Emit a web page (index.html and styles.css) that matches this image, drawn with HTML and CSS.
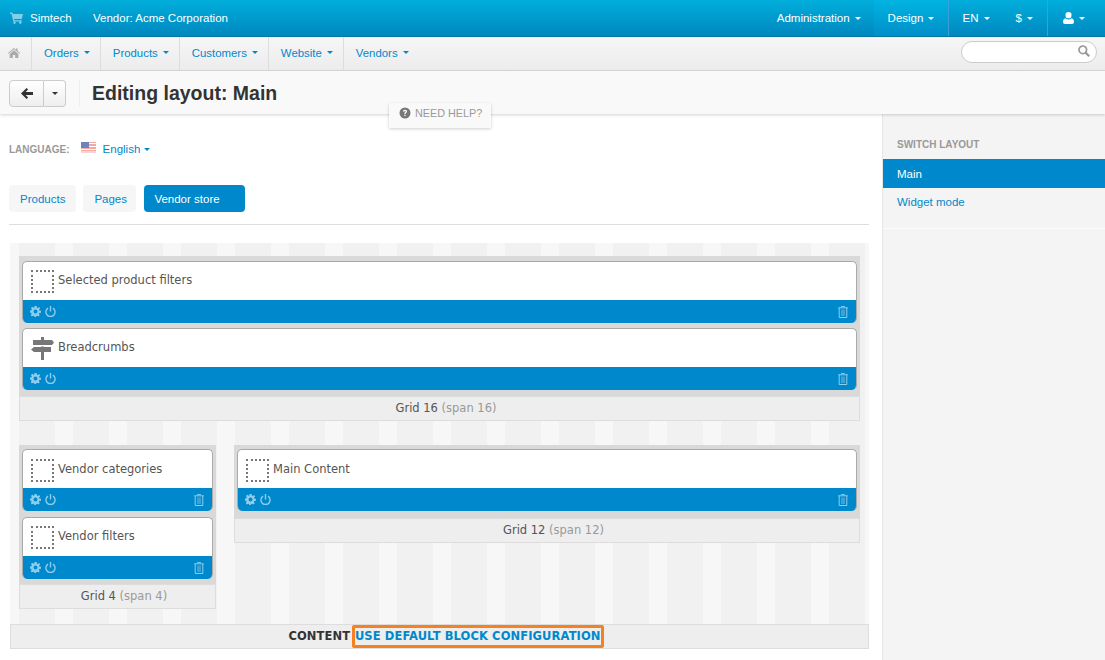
FILE: index.html
```html
<!DOCTYPE html>
<html>

<head>
    <title>Editing layout: Main</title>
    <link rel="stylesheet" href="styles.css">
</head>

<body>
    <!-- top bar -->
    <div class="topbar">
        <svg class="cart-icon" viewBox="0 0 13 12"><path d="M0 .5h2.4l.4 1.5H13l-1.2 5H4l.3 1.2h7.6v1.2H3.300L1.500 1.700H0zM4.500 9.500a1.200 1.200 0 1 0 .01 0zM10.300 9.500a1.200 1.200 0 1 0 .01 0z" /></svg>
        <a class="top-link brand">Simtech</a>
        <a class="top-link vendor">Vendor: Acme Corporation</a>
        <div class="top-right">
            <a class="top-item admin">Administration<span class="caret"></span></a>
            <a class="top-item active">Design<span class="caret"></span></a>
            <a class="top-item lang">EN<span class="caret"></span></a>
            <a class="top-item money">$<span class="caret"></span></a>
            <a class="top-item user">
                <svg class="user-icon" viewBox="0 0 11 12"><path d="M5.500 0a3 3 0 0 1 3 3.200 3 3 0 0 1-3 3.100 3 3 0 0 1-3-3.100 3 3 0 0 1 3-3.200zM2.400 6.200a4.200 4.200 0 0 0 6.200 0C10.200 6.600 11 8 11 10c0 1.200-.8 2-2 2H2c-1.200 0-2-.8-2-2 0-2 .8-3.400 2.400-3.800z" /></svg>
                <span class="caret"></span>
            </a>
        </div>
    </div>

    <!-- second nav -->
    <div class="subnav">
        <a class="home">
            <svg class="home-icon" viewBox="0 0 12 10"><path d="M6 0l2 1.700V.6h1.500v2.400L12 5.100l-.6.700L6 1.300.6 5.800 0 5.100zM6 2.300l4.300 3.600V10H7.200V7H4.800v3H1.700V5.900z" /></svg>
        </a>
        <a class="sub-item">Orders<span class="caret blue"></span></a>
        <a class="sub-item">Products<span class="caret blue"></span></a>
        <a class="sub-item">Customers<span class="caret blue"></span></a>
        <a class="sub-item">Website<span class="caret blue"></span></a>
        <a class="sub-item">Vendors<span class="caret blue"></span></a>
        <div class="search">
            <svg class="search-icon" viewBox="0 0 12 12"><circle cx="4.800" cy="4.800" r="3.800" fill="none" stroke="#999" stroke-width="1.700" /><path d="M7.600 7.600l3.600 3.600" stroke="#999" stroke-width="2.200" /></svg>
        </div>
    </div>

    <!-- toolbar -->
    <div class="toolbar">
        <div class="btn-group">
            <a class="btn back">
                <svg class="back-icon" viewBox="0 0 12 11"><path d="M5.600 0l1.500 1.500-2.500 2.600H12v2.800H4.600l2.500 2.600L5.600 11 0 5.500z" /></svg>
            </a>
            <a class="btn more"><span class="caret dark"></span></a>
        </div>
        <h1>Editing layout: Main</h1>
    </div>

    <div class="help-tab">
        <svg class="help-icon" viewBox="0 0 12 12"><circle cx="6" cy="6" r="5.500" fill="#777" /><path d="M4 4.700C4.100 3.400 5 2.800 6.100 2.800c1.200 0 2 .7 2 1.700 0 1.500-1.500 1.300-1.500 2.500H5.300c0-1.700 1.400-1.600 1.400-2.400 0-.4-.3-.6-.7-.6-.5 0-.7.300-.8.700zM5.300 7.700h1.400v1.400H5.300z" fill="#f9f9f9" /></svg>
        NEED HELP?
    </div>

    <div class="page">
        <div class="content">
            <div class="language">
                <span class="language-label">LANGUAGE:</span>
                <svg class="flag" viewBox="0 0 15 11"><rect width="15" height="11" fill="#f4a9a4" /><path d="M0 1.500h15M0 4.500h15M0 7.500h15M0 10h15" stroke="#fff" stroke-width="1.200" /><rect width="8" height="6" fill="#6f82bd" /></svg>
                <a class="language-link">English<span class="caret blue"></span></a>
            </div>

            <div class="tabs">
                <a class="tab">Products</a>
                <a class="tab">Pages</a>
                <a class="tab active">Vendor store</a>
            </div>

            <div class="container">
                <div class="grid">
                    <div class="block">
                        <div class="block-head"><span class="no-icon"></span>Selected product filters</div>
                        <div class="block-foot">
                            <svg class="gear"><use href="#gear" /></svg>
                            <svg class="power"><use href="#power" /></svg>
                            <svg class="trash"><use href="#trash" /></svg>
                        </div>
                    </div>
                    <div class="block">
                        <div class="block-head">
                            <svg class="sign-icon" viewBox="0 0 23 23"><path d="M10 0h3v3h8l2 2.500L21 8h-8v2h7v5h-7v8h-3v-8H3l-3-2.500L3 10h7V8H2V3h8z" fill="#777" /><path d="M0 8.800h23" stroke="#fff" stroke-width="1.400" /></svg>
                            Breadcrumbs
                        </div>
                        <div class="block-foot">
                            <svg class="gear"><use href="#gear" /></svg>
                            <svg class="power"><use href="#power" /></svg>
                            <svg class="trash"><use href="#trash" /></svg>
                        </div>
                    </div>
                    <div class="grid-caption">Grid 16 <span>(span 16)</span></div>
                </div>

                <div class="grid-row">
                    <div class="grid grid-4">
                        <div class="block">
                            <div class="block-head"><span class="no-icon"></span>Vendor categories</div>
                            <div class="block-foot">
                                <svg class="gear"><use href="#gear" /></svg>
                                <svg class="power"><use href="#power" /></svg>
                                <svg class="trash"><use href="#trash" /></svg>
                            </div>
                        </div>
                        <div class="block">
                            <div class="block-head"><span class="no-icon"></span>Vendor filters</div>
                            <div class="block-foot">
                                <svg class="gear"><use href="#gear" /></svg>
                                <svg class="power"><use href="#power" /></svg>
                                <svg class="trash"><use href="#trash" /></svg>
                            </div>
                        </div>
                        <div class="grid-caption">Grid 4 <span>(span 4)</span></div>
                    </div>
                    <div class="grid grid-12">
                        <div class="block">
                            <div class="block-head"><span class="no-icon"></span>Main Content</div>
                            <div class="block-foot">
                                <svg class="gear"><use href="#gear" /></svg>
                                <svg class="power"><use href="#power" /></svg>
                                <svg class="trash"><use href="#trash" /></svg>
                            </div>
                        </div>
                        <div class="grid-caption">Grid 12 <span>(span 12)</span></div>
                    </div>
                </div>
            </div>

            <div class="container-foot">
                <b>CONTENT</b>
                <a class="default-link">USE DEFAULT BLOCK CONFIGURATION</a>
            </div>
        </div>

        <div class="sidebar">
            <div class="sidebar-box">
                <h4>SWITCH LAYOUT</h4>
                <a class="side-link active">Main</a>
                <a class="side-link">Widget mode</a>
            </div>
        </div>
    </div>

    <!-- icons used by the blocks -->
    <svg class="icon-defs">
        <symbol id="gear" viewBox="0 0 12 12">
            <path fill-rule="evenodd" d="M4.800 0h2.400l.3 1.700 1 .4L10 1.200 11 2.800 9.800 4l.2.900 2 .3v2.200l-2 .3-.3 1 1 1.400-1.600 1.400-1.400-1-.9.400-.3 1.700H4.800l-.3-1.700-1-.4-1.400 1L.8 9.900l1-1.400-.4-1L0 7.200V4.900l1.600-.3.400-1L1 2.300 2.500.9l1.400 1 .9-.4zM6 3.900a2.100 2.100 0 1 0 .01 0z" />
        </symbol>
        <symbol id="power" viewBox="0 0 12 12">
            <path d="M3.300 2.300a5 5 0 1 0 5.400 0M6 0v6" fill="none" stroke="currentColor" stroke-width="1.500" />
        </symbol>
        <symbol id="trash" viewBox="0 0 10 12">
            <path d="M3.500 1V.4h3V1M.2 1.800h9.600M1.200 2v9.500h7.600V2" fill="none" stroke="currentColor" stroke-width="1" />
            <path d="M3 3.500h4v6.500H3z" fill="currentColor" opacity=".4" />
        </symbol>
    </svg>
</body>

</html>
```

FILE: styles.css
```css
html,
body {
    height: 660px;
    overflow: hidden;
}

body {
    margin: 0;
    font-family: "Liberation Sans", Arial, sans-serif;
    font-size: 12px;
    color: #333333;
    background-color: #ffffff;
    position: relative;
}

a {
    color: #0088cc;
    text-decoration: none;
}

.caret {
    display: inline-block;
    width: 0;
    height: 0;
    margin-left: 5px;
    vertical-align: 2px;
    border-top: 3px solid #ffffff;
    border-left: 3px solid transparent;
    border-right: 3px solid transparent;
}

.caret.blue {
    border-top-color: #0088cc;
}

.caret.dark {
    margin-left: 0;
    border-top-color: #333333;
}

/* top bar */
.topbar {
    display: flex;
    align-items: center;
    height: 36px;
    background: linear-gradient(to bottom, #00aedb, #0088c0);
    border-bottom: 1px solid #00769f;
}

.cart-icon {
    width: 13px;
    height: 12px;
    margin-left: 10px;
    fill: #7fd0ea;
}

.top-link {
    color: #ffffff;
    font-size: 11.5px;
}

.brand {
    margin-left: 7px;
}

.vendor {
    margin-left: 21.5px;
}

.top-right {
    display: flex;
    align-items: stretch;
    height: 36px;
    margin-left: auto;
}

.top-item {
    display: flex;
    align-items: center;
    padding: 0 14px;
    color: #ffffff;
    font-size: 11.5px;
}

.top-item.admin {
    padding-right: 13px;
}

.top-item.active {
    width: 75px;
    box-sizing: border-box;
    background: linear-gradient(to bottom, #00b4e2, #008fc8);
    border-right: 1px solid #3a9fdc;
}

.top-item.money {
    padding-left: 12px;
    padding-right: 14px;
    border-right: 1px solid #3a9fdc;
}

.top-item.user {
    width: 57px;
    box-sizing: border-box;
    padding: 0 0 0 15px;
}

.user-icon {
    width: 11px;
    height: 12px;
    fill: #ffffff;
}

/* second nav */
.subnav {
    display: flex;
    align-items: stretch;
    height: 33px;
    background: linear-gradient(to bottom, #f6f6f6, #ececec);
    border-bottom: 1px solid #d9d9d9;
    position: relative;
}

.home {
    display: flex;
    align-items: center;
    box-sizing: border-box;
    width: 31px;
    padding-left: 8px;
}

.home-icon {
    width: 12px;
    height: 10px;
    margin-bottom: 2px;
    fill: #aaaaaa;
}

.sub-item {
    display: flex;
    align-items: center;
    padding: 0 10px 2px 12px;
    border-left: 1px solid #dddddd;
    font-size: 11.4px;
}

.search {
    width: 134px;
    height: 20px;
    margin: 4px 8px 0 auto;
    background-color: #ffffff;
    border: 1px solid #cccccc;
    border-radius: 11px;
    display: flex;
    justify-content: flex-end;
}

.search-icon {
    width: 12px;
    height: 12px;
    margin: 3px 6px 0 0;
}

/* toolbar */
.toolbar {
    display: flex;
    align-items: center;
    height: 43px;
    padding-left: 9px;
    background-color: #f9f9f9;
    box-shadow: 0 1px 3px rgba(0, 0, 0, 0.18);
    position: relative;
}

.btn-group {
    display: flex;
    height: 27px;
    padding-right: 13px;
    margin-top: 1px;
    border-right: 1px solid #eeeeee;
}

.btn {
    display: flex;
    align-items: center;
    justify-content: center;
    box-sizing: border-box;
    height: 27px;
    background: linear-gradient(to bottom, #ffffff, #eeeeee);
    border: 1px solid #cccccc;
}

.back {
    width: 35px;
    border-radius: 4px 0 0 4px;
}

.more {
    width: 22px;
    border-left: none;
    border-radius: 0 4px 4px 0;
}

.back-icon {
    width: 12px;
    height: 11px;
    fill: #333333;
}

h1 {
    margin: 2px 0 0 12px;
    font-size: 19.5px;
    line-height: 27px;
    color: #333333;
}

.help-tab {
    position: absolute;
    left: 389px;
    top: 103px;
    width: 102px;
    height: 25px;
    box-sizing: border-box;
    padding: 4px 0 0 26px;
    background-color: #f9f9f9;
    box-shadow: 0 1px 3px rgba(0, 0, 0, 0.2);
    font-size: 10.8px;
    line-height: 13px;
    color: #999999;
}

.help-icon {
    position: absolute;
    left: 10px;
    top: 4px;
    width: 12px;
    height: 12px;
}

/* page */
.page {
    display: flex;
    height: 546px;
}

.content {
    box-sizing: border-box;
    width: 882px;
    padding: 0 13px 0 10px;
}

.language {
    display: flex;
    align-items: center;
    height: 16px;
    margin: 27px 0 0 -1px;
}

.language-label {
    font-size: 10px;
    font-weight: bold;
    color: #999999;
}

.flag {
    width: 15px;
    height: 11px;
    margin: -3px 0 0 11px;
}

.language-link {
    margin-left: 7px;
    font-size: 11.5px;
}

.language-link .caret {
    margin-left: 4px;
}

.tabs {
    display: flex;
    gap: 7px;
    margin: 28px 0 0 -1px;
    padding-bottom: 12px;
    border-bottom: 1px solid #dddddd;
}

.tab {
    height: 27px;
    padding: 0 11px;
    line-height: 28px;
    font-size: 11.5px;
    background-color: #f6f6f6;
    border-radius: 4px;
}

.tab:nth-child(2) {
    box-sizing: border-box;
    width: 53px;
    margin-right: 1px;
}

.tab.active {
    box-sizing: border-box;
    width: 101px;
    padding-left: 10px;
    color: #ffffff;
    background-color: #0088cc;
}

/* layout grid */
.container {
    margin-top: 18px;
    padding: 13px 9px 15px;
    background: repeating-linear-gradient(to right, #f7f7f7 0, #f7f7f7 9px, #f1f1f1 9px, #f1f1f1 45px, #f7f7f7 45px, #f7f7f7 54px);
}

.grid {
    padding-top: 5px;
    background-color: #d9d9d9;
}

.block {
    margin: 0 3px 5px;
    height: 62px;
    box-sizing: border-box;
    border: 1px solid #aaaaaa;
    border-bottom: none;
    border-radius: 5px;
    background-color: #ffffff;
    display: flex;
    flex-direction: column;
    overflow: hidden;
    font-family: "DejaVu Sans", sans-serif;
}

.block-head {
    display: flex;
    align-items: center;
    height: 38px;
    padding: 0 0 2px 8px;
    box-sizing: border-box;
    font-size: 11.5px;
    color: #555555;
}

.grid-row .block:first-child .block-head {
    padding-bottom: 0;
}

.no-icon {
    box-sizing: border-box;
    width: 23px;
    height: 23px;
    margin: 2px 4px 0 0;
    border: 2px dotted #777777;
}

.sign-icon {
    width: 23px;
    height: 23px;
    margin: 2px 4px 0 0;
}

.block-foot {
    flex: 1;
    display: flex;
    align-items: center;
    padding: 0 8px 0 7px;
    background-color: #0088cc;
    color: #8fcdec;
}

.gear {
    width: 11px;
    height: 11px;
    fill: #8fcdec;
}

.power {
    width: 11px;
    height: 11px;
    margin-left: 4px;
}

.trash {
    width: 10px;
    height: 12px;
    margin-left: auto;
}

.grid-caption {
    height: 23px;
    line-height: 23px;
    margin-top: 6px;
    padding-left: 13px;
    background-color: #eeeeee;
    border: 1px solid #dddddd;
    font-family: "DejaVu Sans", sans-serif;
    font-size: 11.5px;
    text-align: center;
    color: #555555;
}

.grid-caption span {
    color: #999999;
}

.grid-row {
    display: flex;
    align-items: flex-start;
    gap: 18px;
    margin-top: 24px;
}

.grid-row .grid {
    padding-top: 4px;
}

.grid-4 {
    width: 197px;
}

.grid-4 .block:first-child {
    margin-bottom: 6px;
}

.grid-4 .grid-caption {
    margin-top: 5px;
}

.grid-12 {
    width: 626px;
}

.grid-12 .grid-caption {
    margin-top: 7px;
}

.container-foot {
    height: 23px;
    line-height: 23px;
    padding-left: 13px;
    background-color: #eeeeee;
    border: 1px solid #dddddd;
    font-family: "DejaVu Sans", sans-serif;
    font-size: 11.5px;
    letter-spacing: 0.1px;
    text-align: center;
    color: #333333;
}

.default-link {
    display: inline-block;
    vertical-align: top;
    height: 17px;
    line-height: 17px;
    border: 3px solid #f58220;
    border-radius: 2px;
    font-weight: bold;
    margin-left: -2px;
}

/* sidebar */
.sidebar {
    flex: 1;
    background-color: #f4f4f4;
    border-left: 1px solid #e6e6e6;
}

.sidebar-box {
    height: 115px;
    padding-top: 24px;
    box-sizing: border-box;
    border-bottom: 1px solid #fbfbfb;
}

.sidebar-box h4 {
    margin: 0 0 8px 14px;
    font-size: 10px;
    line-height: 13px;
    color: #999999;
}

.side-link {
    display: block;
    height: 29px;
    padding-left: 14px;
    line-height: 28px;
    font-size: 11.5px;
}

.side-link.active {
    line-height: 30px;
    color: #ffffff;
    background-color: #0088cc;
}

.icon-defs {
    display: none;
}
```
